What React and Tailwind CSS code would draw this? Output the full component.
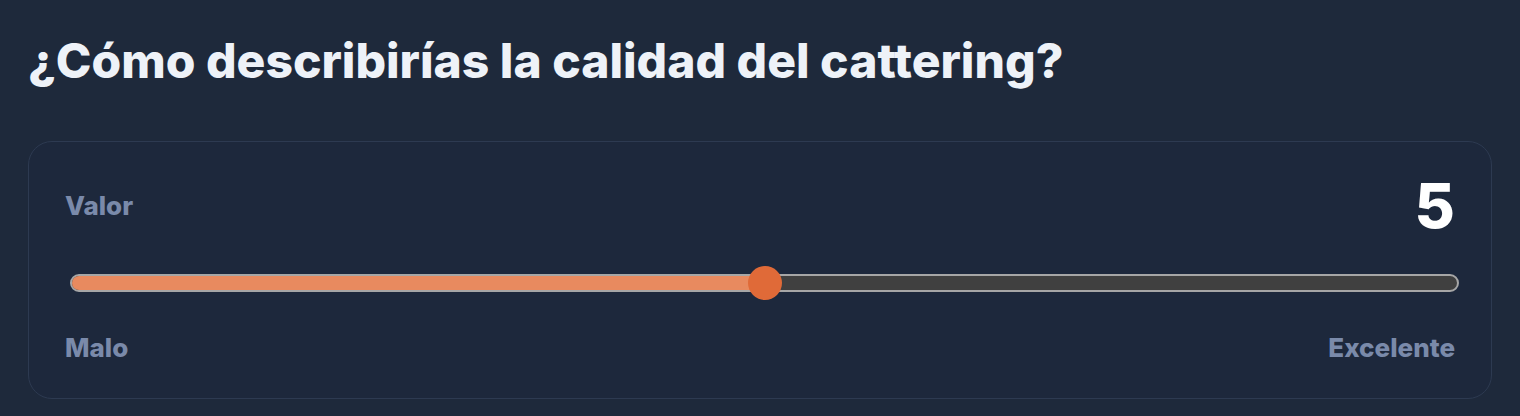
import React, { useState } from "react";

const MIN = 0;
const MAX = 10;

export default function App() {
  const [value] = useState(5);
  const pct = ((value - MIN) / (MAX - MIN)) * 100;

  return (
    <div
      className="min-h-screen bg-[#1e293b] px-[28px] pt-[37px]"
      style={{ fontFamily: "Inter, 'Noto Sans', sans-serif" }}
    >
      <h2 className="text-[48px] leading-none font-extrabold text-[#eef2f8]">
        ¿Cómo describirías la calidad del cattering?
      </h2>

      <div className="mt-[56px] rounded-[24px] border border-[#2d3a51] bg-[#1d283c] px-[36px] pt-[33px] pb-[37px]">
        <div className="flex items-center justify-between">
          <span className="text-[26px] leading-none font-extrabold text-[#7a8aaa]">
            Valor
          </span>
          <span className="text-[62px] leading-none font-extrabold text-white">
            {value}
          </span>
        </div>

        {/* slider track */}
        <div className="relative ml-[5px] -mr-[4px] mt-[37px] h-[18px]">
          <div className="h-full rounded-full border-2 border-[#a6a6a6] bg-[#404040] overflow-hidden">
            <div
              className="h-full bg-[#e88a5f]"
              style={{ width: `${pct}%` }}
            />
          </div>
          <div
            className="absolute top-1/2 h-[34px] w-[34px] -translate-x-1/2 -translate-y-1/2 rounded-full bg-[#e06a38]"
            style={{ left: `${pct}%` }}
          />
        </div>

        <div className="mt-[43px] flex items-center justify-between">
          <span className="text-[26px] leading-none font-extrabold text-[#7a8aaa]">
            Malo
          </span>
          <span className="text-[26px] leading-none font-extrabold text-[#7a8aaa]">
            Excelente
          </span>
        </div>
      </div>
    </div>
  );
}
